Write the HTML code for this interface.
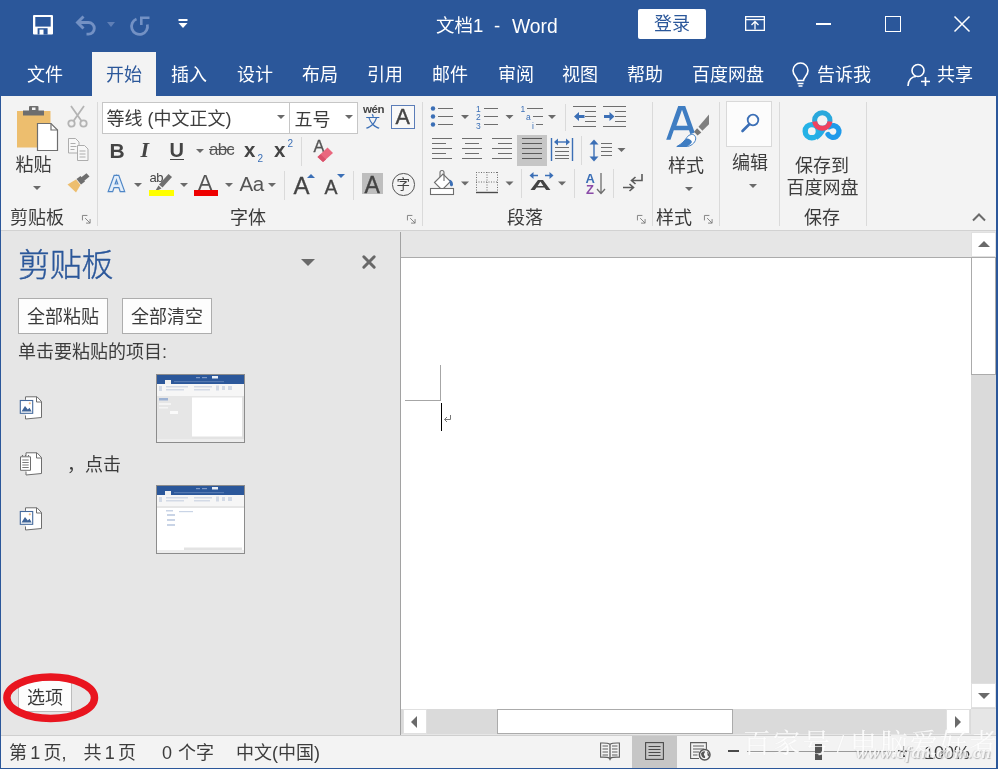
<!DOCTYPE html>
<html lang="zh-CN">
<head>
<meta charset="utf-8">
<title>文档1 - Word</title>
<style>
*{box-sizing:border-box;margin:0;padding:0}
html,body{width:998px;height:769px;overflow:hidden;background:#E6E6E6}
body{font-family:"Liberation Sans","Noto Sans CJK SC",sans-serif;font-size:18px;color:#3A3A3A;position:relative}
body>*{will-change:transform}
.abs,.t,.i{position:absolute}
.t{white-space:nowrap;line-height:1}
svg{position:absolute;overflow:visible}
#title{position:absolute;left:0;top:0;width:998px;height:96px;background:#2B579A}
#title .t{color:#fff;font-size:18px}
#ribbon{position:absolute;left:0;top:96px;width:998px;height:135px;background:#F3F3F3;border-bottom:1px solid #D2D2D2}
.sep{position:absolute;width:1px;background:#DADADA}
.gl{font-size:18px;color:#3A3A3A}
#pane{position:absolute;left:0;top:231px;width:400px;height:504px;background:#E6E6E6}
#doc{position:absolute;left:400px;top:231px;width:598px;height:504px;background:#E6E6E6}
#status{position:absolute;left:0;top:735px;width:998px;height:34px;background:#F3F3F3;border-top:1px solid #CFCFCF}
.btn{position:absolute;background:#FDFDFD;border:1px solid #ADADAD;font-size:18px;text-align:center;color:#3A3A3A}
#lb{position:absolute;left:0;top:52px;width:998px;height:717px;border:solid #2B579A;border-width:0 2px 1px 1px;pointer-events:none}
</style>
</head>
<body>
<div id="title">
<!--TITLE-->
<!-- quick access -->
<svg style="left:33px;top:15px" width="20" height="20" viewBox="0 0 20 20"><path d="M1 0h18a1 1 0 0 1 1 1v17.500a1 1 0 0 1-1 1H1a1 1 0 0 1-1-1V1a1 1 0 0 1 1-1z" fill="#fff"/><rect x="2.300" y="2" width="15.400" height="9.600" fill="#2B579A"/><rect x="4.600" y="13.200" width="10" height="6.300" fill="#2B579A"/><rect x="6.500" y="14.600" width="4" height="4.900" fill="#fff"/></svg>
<svg style="left:75px;top:15px" width="24" height="21" viewBox="0 0 24 21" fill="none" stroke="#7391C4" stroke-width="2.900"><path d="M8.500 1.500 L2.500 7.500 L8.500 13.500"/><path d="M3 7.500 H13.500 a5.800 5.800 0 0 1 0 11.600 H11.500"/></svg>
<svg style="left:107px;top:22px" width="8" height="5" viewBox="0 0 8 5"><path d="M0 0h8L4 5z" fill="#5F7FB6"/></svg>
<svg style="left:129px;top:14px" width="22" height="22" viewBox="129 14 22 22" fill="none" stroke="#7391C4" stroke-width="2.800"><path d="M147.300 24.500 A8 8 0 1 1 136.500 19"/><path d="M141.300 25 V17.800 H149.500" stroke-width="2.600"/></svg>
<svg style="left:178px;top:19px" width="10" height="9" viewBox="0 0 10 9"><rect x="0.5" y="0" width="9" height="2" fill="#fff"/><path d="M0.5 4h9L5 9z" fill="#fff"/></svg>
<div class="t" style="left:436px;top:17px;font-size:18.500px">文档1</div><div class="t" style="left:494px;top:17px;font-size:18.500px">-</div><div class="t" style="left:512px;top:16.500px;font-size:19.300px">Word</div>
<div class="abs" style="left:638px;top:9px;width:68px;height:30px;background:#fff;border-radius:2px"></div>
<div class="t" style="left:654px;top:15px;color:#2B579A!important">登录</div>
<svg style="left:745px;top:16px" width="20" height="15" viewBox="0 0 20 15" fill="none" stroke="#fff" stroke-width="1.3"><rect x="0.65" y="0.65" width="18.7" height="13.7"/><path d="M0.65 3.6H19.35"/><path d="M10 13.500V5.500M6.500 9l3.500-3.500 3.500 3.500"/></svg>
<div class="abs" style="left:816px;top:23.300px;width:15px;height:1.400px;background:#fff"></div>
<div class="abs" style="left:885px;top:16px;width:15.500px;height:15.500px;border:1.400px solid #fff"></div>
<svg style="left:954px;top:16px" width="16" height="16" viewBox="0 0 16 16" stroke="#fff" stroke-width="1.5"><path d="M0.5 0.5L15.5 15.5M15.5 0.5L0.5 15.5"/></svg>
<!-- tabs -->
<div class="abs" style="left:92px;top:52px;width:64px;height:44px;background:#F3F3F3"></div>
<div class="t" style="left:27px;top:65.700px">文件</div>
<div class="t" style="left:106px;top:65.700px;color:#2B579A!important">开始</div>
<div class="t" style="left:171px;top:65.700px">插入</div>
<div class="t" style="left:237px;top:65.700px">设计</div>
<div class="t" style="left:302px;top:65.700px">布局</div>
<div class="t" style="left:367px;top:65.700px">引用</div>
<div class="t" style="left:432px;top:65.700px">邮件</div>
<div class="t" style="left:498px;top:65.700px">审阅</div>
<div class="t" style="left:562px;top:65.700px">视图</div>
<div class="t" style="left:627px;top:65.700px">帮助</div>
<div class="t" style="left:692px;top:65.700px">百度网盘</div>
<svg style="left:792px;top:62px" width="17" height="25" viewBox="0 0 17 25" fill="none" stroke="#fff" stroke-width="1.6"><path d="M5.5 18.5c0-3-4.5-5-4.5-10a7.5 7.5 0 0 1 15 0c0 5-4.500 7-4.500 10z"/><path d="M5.500 21.500h6M6.500 24h4"/></svg>
<div class="t" style="left:817px;top:65.700px">告诉我</div>
<svg style="left:907px;top:63px" width="24" height="24" viewBox="0 0 24 24" fill="none" stroke="#fff" stroke-width="1.6"><circle cx="11" cy="7.500" r="6"/><path d="M1 23c0-6 4-9.500 8-9.500"/><path d="M18.500 14v9M14 18.500h9"/></svg>
<div class="t" style="left:937px;top:65.700px">共享</div>
<!--/TITLE-->
</div>
<div id="ribbon">
<!--RIBBON-->
<!-- coordinates inside ribbon: y = pageY-96 -->
<div class="sep" style="left:97px;top:6px;height:124px"></div>
<div class="sep" style="left:422px;top:6px;height:124px"></div>
<div class="sep" style="left:652px;top:6px;height:124px"></div>
<div class="sep" style="left:719px;top:6px;height:124px"></div>
<div class="sep" style="left:779px;top:6px;height:124px"></div>
<div class="sep" style="left:866px;top:6px;height:124px"></div>
<!-- clipboard group -->
<svg style="left:16px;top:9px" width="44" height="47" viewBox="0 0 44 47">
<rect x="1" y="6" width="33.500" height="36.500" fill="#EDBE6E"/>
<rect x="13" y="1" width="9.500" height="6" rx="1" fill="#6E6E6E"/><rect x="16" y="2.500" width="3.500" height="2.500" fill="#F3F3F3"/>
<rect x="7" y="5.500" width="21" height="5" fill="#6E6E6E"/>
<path d="M21.500 18.500h13.500l6.500 6.500v20.500h-20z" fill="#fff" stroke="#6E6E6E" stroke-width="1.200"/><path d="M35 18.500v6.500h6.500" fill="none" stroke="#6E6E6E" stroke-width="1.200"/>
</svg>
<div class="t" style="left:15.500px;top:60px;color:#3C3C3C">粘贴</div>
<svg class="dd" style="left:33px;top:90px" width="8" height="4" viewBox="0 0 8 4"><path d="M0 0h8L4 4z" fill="#6A6A6A"/></svg>
<!-- scissors -->
<svg style="left:67px;top:9px" width="21" height="23" viewBox="0 0 21 23" fill="none" stroke="#B4B4B4" stroke-width="1.800"><path d="M4 1L14.500 16M17 1L6.500 16"/><circle cx="4.500" cy="18.500" r="3.200"/><circle cx="16.500" cy="18.500" r="3.200"/></svg>
<!-- copy -->
<svg style="left:68px;top:42px" width="21" height="23" viewBox="0 0 21 23" fill="#F7F7F7" stroke="#ADADAD" stroke-width="1"><path d="M0.500 0.500h7l3.500 3.500v11h-10.500z"/><path d="M2.500 5.500h5M2.500 8.500h6M2.500 11.500h4"/><path d="M9.500 7.500h7l3.500 3.500v11.500h-10.500z"/><path d="M11.500 13h6M11.500 16h6M11.500 19h6"/></svg>
<!-- format painter -->
<svg style="left:66px;top:76px" width="25" height="22" viewBox="0 0 25 22"><path d="M15 5.500L20.500 1.200L23.500 4.500L18 9z" fill="#6E6E6E"/><path d="M10.500 7L14.500 4L19 9.500L15 12.500z" fill="#6E6E6E"/><path d="M1.500 12.500L10 7.500L14.500 13L10 20.500z" fill="#EDBE6E"/></svg>
<div class="t gl" style="left:10px;top:113px">剪贴板</div>
<svg class="ln" style="left:81.500px;top:118.500px" width="9" height="9" viewBox="0 0 10 10" fill="none" stroke="#7A7A7A" stroke-width="1"><path d="M0.500 6V0.500H6"/><path d="M3.500 3.500L9 9M9 4.500V9H4.500"/></svg>
<!-- font group -->
<div class="abs" style="left:102px;top:6px;width:256px;height:32px;background:#fff;border:1px solid #C6C6C6"></div>
<div class="abs" style="left:289px;top:6px;width:1px;height:32px;background:#C6C6C6"></div>
<div class="t" style="left:106.500px;top:13.500px;font-size:18px;color:#3C3C3C">等线 (中文正文)</div>
<svg style="left:277px;top:19px" width="8" height="4" viewBox="0 0 8 4"><path d="M0 0h8L4 4z" fill="#6A6A6A"/></svg>
<div class="t" style="left:294.500px;top:14.500px;font-size:18px;color:#3C3C3C">五号</div>
<svg style="left:345px;top:19px" width="8" height="4" viewBox="0 0 8 4"><path d="M0 0h8L4 4z" fill="#6A6A6A"/></svg>
<div class="t" style="left:363px;top:8px;font-size:11.500px;font-weight:bold;color:#444;letter-spacing:-0.400px">wén</div>
<div class="t" style="left:365.500px;top:18.500px;font-size:14.500px;color:#3B6FB6">文</div>
<div class="abs" style="left:391px;top:9px;width:24px;height:24px;border:1px solid #5B7DB8;background:#F8F8F8"></div>
<div class="t" style="left:395.500px;top:11px;font-size:21.500px;color:#444;-webkit-text-stroke:0.400px #444">A</div>
<!-- row 2 -->
<div class="t" style="left:109.500px;top:43.500px;font-size:21px;font-weight:bold;color:#444">B</div>
<div class="t" style="left:140.500px;top:42.500px;font-size:22px;font-weight:bold;font-style:italic;color:#444;font-family:'Liberation Serif',serif">I</div>
<div class="t" style="left:169.500px;top:43.500px;font-size:20px;font-weight:bold;color:#444">U</div>
<div class="abs" style="left:170px;top:63px;width:14px;height:1px;background:#444"></div>
<svg style="left:196px;top:53px" width="8" height="4" viewBox="0 0 8 4"><path d="M0 0h8L4 4z" fill="#6A6A6A"/></svg>
<div class="t" style="left:209px;top:45px;font-size:17px;color:#555;letter-spacing:-0.800px;text-decoration:line-through">abc</div>
<div class="t" style="left:244px;top:44px;font-size:20.500px;font-weight:bold;color:#444">x</div>
<div class="t" style="left:257.500px;top:57.500px;font-size:10px;color:#3B6FB6">2</div>
<div class="t" style="left:274px;top:44px;font-size:20.500px;font-weight:bold;color:#444">x</div>
<div class="t" style="left:287.500px;top:43px;font-size:10px;color:#3B6FB6">2</div>
<div class="sep" style="left:301px;top:41px;height:29px"></div>
<div class="t" style="left:313.500px;top:41.500px;font-size:16.500px;color:#555;-webkit-text-stroke:0.300px #555">A</div>
<svg style="left:316px;top:50px" width="18" height="17" viewBox="0 0 18 17"><path d="M1.500 11L11.500 1.500L17 7L7 16z" fill="#E9677E"/><path d="M1.500 11L4.500 8.200L10 13.500L7 16z" fill="#D9506A"/></svg>
<!-- row 3 -->
<div class="t" style="left:108.500px;top:77px;font-size:22px;font-weight:bold;color:#E4EEF9;-webkit-text-stroke:2.400px #4E86C6;paint-order:stroke">A</div>
<svg style="left:134px;top:87px" width="8" height="4" viewBox="0 0 8 4"><path d="M0 0h8L4 4z" fill="#6A6A6A"/></svg>
<div class="t" style="left:149.500px;top:74.500px;font-size:13px;color:#444;letter-spacing:-0.500px">ab</div>
<svg style="left:153px;top:77px" width="20" height="19" viewBox="0 0 20 19"><path d="M15.500 1L19 4L9.500 14.500L6 11.500z" fill="#6E6E6E"/><path d="M5.500 12.500L8.500 15.500L3 18L2.500 17.500z" fill="#6E6E6E"/></svg>
<div class="abs" style="left:149px;top:94px;width:24.500px;height:5.500px;background:#FFFF00"></div>
<svg style="left:180px;top:87px" width="8" height="4" viewBox="0 0 8 4"><path d="M0 0h8L4 4z" fill="#6A6A6A"/></svg>
<div class="t" style="left:198px;top:77px;font-size:21.500px;color:#555">A</div>
<div class="abs" style="left:194px;top:94px;width:24px;height:5.500px;background:#EE0000"></div>
<svg style="left:225px;top:87px" width="8" height="4" viewBox="0 0 8 4"><path d="M0 0h8L4 4z" fill="#6A6A6A"/></svg>
<div class="t" style="left:239.500px;top:78px;font-size:20.500px;color:#555;letter-spacing:-0.500px">Aa</div>
<svg style="left:268px;top:87px" width="8" height="4" viewBox="0 0 8 4"><path d="M0 0h8L4 4z" fill="#6A6A6A"/></svg>
<div class="sep" style="left:284px;top:75px;height:29px"></div>
<div class="t" style="left:293.500px;top:78px;font-size:24px;color:#444;-webkit-text-stroke:0.300px #444">A</div>
<svg style="left:306.500px;top:78px" width="8" height="4" viewBox="0 0 8 4"><path d="M0 4h8L4 0z" fill="#3B6FB6"/></svg>
<div class="t" style="left:324.500px;top:82px;font-size:19.500px;color:#444;-webkit-text-stroke:0.300px #444">A</div>
<svg style="left:336.500px;top:78px" width="8" height="4" viewBox="0 0 8 4"><path d="M0 0h8L4 4z" fill="#3B6FB6"/></svg>
<div class="sep" style="left:353px;top:75px;height:29px"></div>
<div class="abs" style="left:362px;top:77px;width:21px;height:21px;background:#BEBEBE"></div>
<div class="t" style="left:364.500px;top:77.500px;font-size:23px;color:#444;-webkit-text-stroke:0.400px #444">A</div>
<div class="abs" style="left:392px;top:77px;width:22.500px;height:22.500px;border:1.500px solid #555;border-radius:50%"></div>
<div class="t" style="left:396.500px;top:81.500px;font-size:13.500px;color:#444">字</div>
<div class="t gl" style="left:230px;top:113px">字体</div>
<svg class="ln" style="left:406.500px;top:118.500px" width="9" height="9" viewBox="0 0 10 10" fill="none" stroke="#7A7A7A" stroke-width="1"><path d="M0.500 6V0.500H6"/><path d="M3.500 3.500L9 9M9 4.500V9H4.500"/></svg>
<!-- paragraph group -->
<svg style="left:430px;top:9px" width="200" height="24" viewBox="430 105 200 24">
<g fill="#3B6FB6"><circle cx="433" cy="108.500" r="2.200"/><circle cx="433" cy="116.500" r="2.200"/><circle cx="433" cy="124.500" r="2.200"/></g>
<g stroke="#6E6E6E" stroke-width="1.200" fill="none"><path d="M438 108.500h15M438 116.500h15M438 124.500h15"/>
<path d="M484 108.500h14M484 116.500h14M484 124.500h14"/>
<path d="M527 108.500h16M533 116.500h10M536 124.500h7"/>
<path d="M573 106.500h23M585 111.500h11M585 116.500h11M585 121.500h11M573 126.500h23"/>
<path d="M603 106.500h23M615 111.500h11M615 116.500h11M615 121.500h11M603 126.500h23"/></g>
<g fill="#6A6A6A"><path d="M461 115h8l-4 4z"/><path d="M505.500 115h8l-4 4z"/><path d="M548 115h8l-4 4z"/></g>
<g font-family="Liberation Sans, sans-serif" font-size="8.500" fill="#3B6FB6"><text x="476" y="111.500">1</text><text x="476" y="120">2</text><text x="476" y="128.500">3</text><text x="520.500" y="111.500">1</text><text x="526" y="120">a</text><text x="532" y="128.500">i</text></g>
<g fill="#3B6FB6"><path d="M574 116.500l5-4.500v3h5.500v3H579v3z"/><path d="M614.500 116.500l-5-4.500v3H604v3h5.500v3z"/></g>
</svg>
<div class="sep" style="left:565px;top:8px;height:27px"></div>
<!-- row 2 -->
<div class="abs" style="left:517px;top:39px;width:30px;height:31px;background:#C6C6C6"></div>
<svg style="left:430px;top:39px" width="200" height="30" viewBox="430 135 200 30">
<g stroke="#6E6E6E" stroke-width="1.200" fill="none">
<path d="M432 138.500h20M432 143.500h14M432 148.500h20M432 153.500h14M432 158.500h20"/>
<path d="M462 138.500h20M465 143.500h14M462 148.500h20M465 153.500h14M462 158.500h20"/>
<path d="M492 138.500h20M498 143.500h14M492 148.500h20M498 153.500h14M492 158.500h20"/>
<path d="M522 138.500h20M522 143.500h20M522 148.500h20M522 153.500h20M522 158.500h20" stroke="#5A5A5A"/>
<path d="M555 147.500h14M555 151.500h14M555 155.500h14M555 158.500h14"/>
<path d="M601 143.500h11M601 147.500h11M601 151.500h11M601 155.500h11"/>
</g>
<g stroke="#3B6FB6" stroke-width="1.400" fill="none"><path d="M551.500 138v23M572.500 138v23"/><path d="M555 142h14"/><path d="M594 142v17"/></g>
<g fill="#3B6FB6"><path d="M554 142l4-3.500v7z"/><path d="M570 142l-4-3.500v7z"/><path d="M594 139.500l4.500 5h-9z"/><path d="M594 161.500l4.500-5h-9z"/></g>
<path d="M617.500 148h8l-4 4z" fill="#6A6A6A"/>
</svg>
<div class="sep" style="left:581px;top:40px;height:29px"></div>
<!-- row 3 -->
<svg style="left:428px;top:73px" width="220" height="28" viewBox="428 169 220 28">
<!-- bucket -->
<g fill="#fff" stroke="#6E6E6E" stroke-width="1.100"><path d="M434.500 182.500L443 174l7.500 7.500-8.500 8.500z"/><path d="M440 177v-4.500a2 2 0 0 1 4 0V181" fill="none"/><rect x="430.500" y="188.500" width="23" height="6"/></g>
<path d="M449.500 179.500c2 0.500 3.500 2.500 3.500 5c0 2-2.500 2.500-3 0.500z" fill="#3B6FB6"/>
<g fill="#6A6A6A"><path d="M461 181.500h8l-4 4z"/><path d="M505.500 181.500h8l-4 4z"/><path d="M558 181.500h8l-4 4z"/></g>
<!-- borders -->
<g stroke="#6E6E6E" stroke-width="1" fill="none" stroke-dasharray="1 1.500"><path d="M476.500 172v20M487 172v20M497.500 172v20M476 172.500h22M476 182h22"/></g>
<path d="M476 192.500h22" stroke="#4A4A4A" stroke-width="1.400"/>
<!-- asian layout -->
<text x="529.800" y="190.500" font-family="Liberation Sans, sans-serif" font-size="14.500" font-weight="bold" fill="#444" transform="translate(529.800 0) scale(2.050 1) translate(-529.800 0)">A</text>
<g stroke="#3B6FB6" stroke-width="1.300" fill="none"><path d="M531 175.500h7M545 175.500h7"/></g>
<g fill="#3B6FB6"><path d="M529.500 175.500l4-3.500v7z"/><path d="M553.500 175.500l-4-3.500v7z"/></g>
<!-- sort -->
<text x="585.500" y="182.500" font-family="Liberation Sans, sans-serif" font-size="13" font-weight="bold" fill="#3B6FB6">A</text>
<text x="586" y="194" font-family="Liberation Sans, sans-serif" font-size="13" font-weight="bold" fill="#8A4BA8">Z</text>
<g stroke="#6E6E6E" stroke-width="1.300" fill="none"><path d="M601 173v20M597 189l4 4.500 4-4.500"/></g>
<!-- show marks -->
<g stroke="#5A5A5A" stroke-width="1.600" fill="none"><path d="M642 174v6.500h-10M635.500 177l-4 3.500 4 3.500"/><path d="M623 187.500h10M629.500 184l4 3.500-4 3.500"/></g>
</svg>
<div class="sep" style="left:521px;top:73px;height:29px"></div>
<div class="sep" style="left:574px;top:73px;height:29px"></div>
<div class="sep" style="left:613px;top:73px;height:29px"></div>
<div class="t gl" style="left:507px;top:113px">段落</div>
<svg class="ln" style="left:636.500px;top:118.500px" width="9" height="9" viewBox="0 0 10 10" fill="none" stroke="#7A7A7A" stroke-width="1"><path d="M0.500 6V0.500H6"/><path d="M3.500 3.500L9 9M9 4.500V9H4.500"/></svg>
<!-- styles group -->
<svg style="left:664px;top:8px" width="48" height="44" viewBox="664 104 48 44">
<path d="M666.200 139.800L678.200 106h7l9.500 26.500l-4.300 1.800l-1.400-4h-15.200l-3.300 9.500zM676.400 125.700h11.200l-5.600-16z" fill="#3F7DC2"/>
<path d="M709 114.500v9.800l-6.600 6.400l-3.900-3.900z" fill="#7F7F7F"/>
<path d="M697.100 128.200l4.200 4.200l-3.800 3.200l-3.500-3.900z" fill="#757575"/>
<path d="M691.500 134.500c2.500-0.500 4.500 2 4.200 4.500c-0.500 4-5 7.500-9.700 7.500h-9.200c5-2.500 8-6 10-9c1.200-1.800 2.700-2.700 4.700-3z" fill="#FDFDFD" stroke="#3F7DC2" stroke-width="1"/>
<path d="M676.800 146.500c4.500-2.200 7.500-5.200 9.500-8c2.500-0.300 4.700 1 5.700 3.500c-1.500 2.700-4 4.500-7 4.500z" fill="#3F7DC2"/>
</svg>
<div class="t" style="left:668px;top:60.500px;color:#3C3C3C">样式</div>
<svg style="left:685px;top:90.500px" width="8" height="4" viewBox="0 0 8 4"><path d="M0 0h8L4 4z" fill="#6A6A6A"/></svg>
<div class="t gl" style="left:656px;top:113px">样式</div>
<svg class="ln" style="left:703.500px;top:118.500px" width="9" height="9" viewBox="0 0 10 10" fill="none" stroke="#7A7A7A" stroke-width="1"><path d="M0.500 6V0.500H6"/><path d="M3.500 3.500L9 9M9 4.500V9H4.500"/></svg>
<!-- editing -->
<div class="abs" style="left:726px;top:5px;width:46px;height:45.500px;background:#FCFCFC;border:1px solid #D9D9D9"></div>
<svg style="left:738px;top:14px" width="24" height="24" viewBox="738 110 24 24" fill="none" stroke="#3B6FB6"><circle cx="753" cy="120" r="5.300" stroke-width="1.800"/><path d="M749 124.500L742.500 131" stroke-width="2.600" stroke-linecap="round"/></svg>
<div class="t" style="left:732px;top:57.500px;color:#3C3C3C">编辑</div>
<svg style="left:748.500px;top:88px" width="8" height="4" viewBox="0 0 8 4"><path d="M0 0h8L4 4z" fill="#6A6A6A"/></svg>
<!-- baidu -->
<svg style="left:800px;top:12px" width="44" height="36" viewBox="800 108 44 36" fill="none">
<circle cx="811.800" cy="131.200" r="6.600" stroke="#25B2E6" stroke-width="5.400"/>
<path d="M816 137.500C820 135.500 822 132 824 128" stroke="#25ACE6" stroke-width="5"/>
<path d="M829.500 126.800A5.900 5.900 0 1 1 828 134.500" stroke="#1F9AEA" stroke-width="5.200" stroke-linecap="round"/>
<circle cx="822.300" cy="120.500" r="7.700" stroke="#2AA8DC" stroke-width="5"/>
<path d="M814.650 121.500a7.700 7.700 0 0 0 15.300 0" stroke="#F0425F" stroke-width="5"/>
</svg>
<div class="t" style="left:795px;top:60.500px;color:#3C3C3C">保存到</div>
<div class="t" style="left:786.500px;top:83px;color:#3C3C3C">百度网盘</div>
<div class="t gl" style="left:804px;top:113px">保存</div>
<svg style="left:972px;top:117px" width="14" height="8" viewBox="0 0 14 8" fill="none" stroke="#6A6A6A" stroke-width="2"><path d="M1 7.500L7 1.500L13 7.500"/></svg>
<!--/RIBBON-->
</div>
<div id="pane">
<!--PANE-->
<!-- coordinates: y = pageY-231 -->
<div class="t" style="left:18px;top:18.300px;font-size:32px;font-weight:300;color:#2B579A;letter-spacing:-0.300px;-webkit-text-stroke:0.350px #2B579A">剪贴板</div>
<svg style="left:301px;top:28px" width="14" height="7" viewBox="0 0 14 7"><path d="M0 0h14L7 7z" fill="#6A6A6A"/></svg>
<svg style="left:362px;top:24px" width="14" height="14" viewBox="0 0 14 14" stroke="#686868" stroke-width="3" stroke-linecap="round"><path d="M1.800 1.800L12.200 12.200M12.200 1.800L1.800 12.200"/></svg>
<div class="btn" style="left:18px;top:67px;width:90px;height:35.500px;line-height:36px">全部粘贴</div>
<div class="btn" style="left:122px;top:67px;width:90px;height:35.500px;line-height:36px">全部清空</div>
<div class="t" style="left:18px;top:112px;font-size:18px;color:#3C3C3C">单击要粘贴的项目:</div>
<!-- item 1 -->
<svg class="pic" style="left:19px;top:165px" width="24" height="24" viewBox="0 0 24 24"><path d="M6.500 19.500v3.500l16-1.500V5.500L18 0.800H6.500v3" fill="#fff" stroke="#6E6E6E" stroke-width="1"/><path d="M17.500 1v5h5" fill="none" stroke="#6E6E6E" stroke-width="1"/><rect x="1.300" y="4.500" width="12.400" height="12.800" fill="#fff" stroke="#44699C" stroke-width="1.100"/><path d="M2.500 15.500l3.500-5.500 2.800 3.500 1.700-1.800 2.200 3.800z" fill="#3F6498"/><circle cx="10.800" cy="7.300" r="1.100" fill="#E9B98B"/></svg>
<svg class="thumb" style="left:156px;top:143px" width="89" height="69" viewBox="0 0 89 69"><rect x="0.500" y="0.500" width="88" height="68" fill="#fff" stroke="#8C8C8C"/><rect x="1" y="1" width="87" height="9" fill="#2B579A"/><g fill="#7E99C6"><rect x="40" y="3" width="4" height="1.200"/><rect x="46" y="3" width="5" height="1.200"/><rect x="18" y="7" width="50" height="1.200" opacity="0.500"/></g><rect x="9" y="6" width="6" height="4" fill="#F0F0F0"/><rect x="56" y="2" width="6" height="2.500" fill="#E8EEF7"/><rect x="1" y="10" width="87" height="12" fill="#F6F6F6"/><g fill="#D3DAE6"><rect x="3" y="12" width="3" height="5"/><rect x="10" y="12" width="22" height="1.500"/><rect x="10" y="15" width="18" height="1.500"/><rect x="38" y="12" width="18" height="1.500"/><rect x="38" y="15" width="16" height="1.500"/><rect x="60" y="11.500" width="3" height="5"/><rect x="66" y="12" width="3" height="4"/><rect x="72" y="12" width="4" height="4"/></g><rect x="1" y="22" width="35" height="43" fill="#E6E6E6"/><rect x="3" y="24" width="9" height="2.500" fill="#9DB2D3"/><rect x="3" y="29" width="12" height="2" fill="#F4F4F4"/><rect x="3" y="33" width="9" height="1.500" fill="#F4F4F4"/><rect x="14" y="37" width="8" height="3" fill="#FAFAFA"/><rect x="36" y="22" width="50" height="1.500" fill="#E6E6E6"/><rect x="86" y="22" width="2" height="43" fill="#E0E0E0"/><rect x="1" y="65" width="87" height="3" fill="#EDEDED"/><rect x="36" y="62.500" width="50" height="2.500" fill="#E3E3E3"/></svg>
<!-- item 2 -->
<svg class="txt" style="left:19px;top:221px" width="24" height="24" viewBox="0 0 24 24"><path d="M7 19.500v3.500l15.500-1.500V5.500L18 0.800H7v3" fill="#fff" stroke="#6E6E6E" stroke-width="1"/><path d="M17.500 1v5h5" fill="none" stroke="#6E6E6E" stroke-width="1"/><path d="M1.500 4.800h10v13.500h-10z" fill="#fff" stroke="#6E6E6E" stroke-width="1"/><path d="M3.500 4.300V3M6.500 4.300V3M9.500 4.300V3" stroke="#6E6E6E" stroke-width="1.200"/><path d="M3.300 8h6.400M3.300 10.500h6.400M3.300 13h6.400M3.300 15.500h6.400" stroke="#7A7A7A" stroke-width="1"/></svg>
<div class="t" style="left:67px;top:224.500px;font-size:18px;color:#3A3A3A">，点击</div>
<!-- item 3 -->
<svg class="pic" style="left:19px;top:276px" width="24" height="24" viewBox="0 0 24 24"><path d="M6.500 19.500v3.500l16-1.500V5.500L18 0.800H6.500v3" fill="#fff" stroke="#6E6E6E" stroke-width="1"/><path d="M17.500 1v5h5" fill="none" stroke="#6E6E6E" stroke-width="1"/><rect x="1.300" y="4.500" width="12.400" height="12.800" fill="#fff" stroke="#44699C" stroke-width="1.100"/><path d="M2.500 15.500l3.500-5.500 2.800 3.500 1.700-1.800 2.200 3.800z" fill="#3F6498"/><circle cx="10.800" cy="7.300" r="1.100" fill="#E9B98B"/></svg>
<svg class="thumb" style="left:156px;top:254px" width="89" height="69" viewBox="0 0 89 69"><rect x="0.500" y="0.500" width="88" height="68" fill="#fff" stroke="#8C8C8C"/><rect x="1" y="1" width="87" height="9" fill="#2B579A"/><g fill="#7E99C6"><rect x="40" y="3" width="4" height="1.200"/><rect x="46" y="3" width="5" height="1.200"/><rect x="18" y="7" width="50" height="1.200" opacity="0.500"/></g><rect x="9" y="6" width="6" height="4" fill="#F0F0F0"/><rect x="56" y="2" width="6" height="2.500" fill="#E8EEF7"/><rect x="1" y="10" width="87" height="11" fill="#F6F6F6"/><g fill="#D3DAE6"><rect x="3" y="12" width="3" height="5"/><rect x="10" y="12" width="22" height="1.500"/><rect x="10" y="15" width="18" height="1.500"/><rect x="38" y="12" width="18" height="1.500"/><rect x="38" y="15" width="16" height="1.500"/><rect x="60" y="11.500" width="3" height="5"/><rect x="66" y="12" width="3" height="4"/><rect x="72" y="12" width="4" height="4"/></g><rect x="1" y="21" width="87" height="2" fill="#E6E6E6"/><g fill="#C9D4E6"><rect x="10" y="25" width="7" height="1.500"/><rect x="11" y="29" width="8" height="2"/><rect x="11" y="34" width="8" height="2"/><rect x="11" y="39" width="8" height="2"/><rect x="23" y="26" width="14" height="1.200"/></g><rect x="1" y="65" width="87" height="3" fill="#EDEDED"/><rect x="28" y="62.500" width="58" height="2.500" fill="#E3E3E3"/></svg>
<!-- options -->
<div class="btn" style="left:18px;top:449px;width:54px;height:32px;line-height:35px;border-color:#BDBDBD">选项</div>
<svg style="left:0;top:438px" width="104" height="56" viewBox="0 669 104 56"><ellipse cx="50.700" cy="697.700" rx="43.800" ry="20.700" fill="none" stroke="#E9151F" stroke-width="7.500"/></svg>
<!--/PANE-->
</div>
<div id="doc">
<!--DOC-->
<!-- coordinates: x = pageX-400, y = pageY-231 -->
<div class="abs" style="left:0;top:1px;width:1px;height:503px;background:#A2A2A2"></div>
<div class="abs" style="left:1px;top:26px;width:570px;height:452px;background:#fff;border-top:1px solid #ABABAB"></div>
<!-- v scrollbar -->
<div class="abs" style="left:571px;top:1px;width:25px;height:477px;background:#DADADA"></div>
<div class="abs" style="left:571px;top:1px;width:25px;height:25px;background:#fff;border:1px solid #E0E0E0"></div>
<svg style="left:578px;top:10px" width="12" height="6" viewBox="0 0 12 6"><path d="M0 6h12L6 0z" fill="#6A6A6A"/></svg>
<div class="abs" style="left:571px;top:26px;width:25px;height:117.500px;background:#fff;border:1px solid #ABABAB"></div>
<div class="abs" style="left:571px;top:452px;width:25px;height:25px;background:#fff;border:1px solid #E0E0E0"></div>
<svg style="left:578px;top:462px" width="12" height="6" viewBox="0 0 12 6"><path d="M0 0h12L6 6z" fill="#6A6A6A"/></svg>
<!-- h scrollbar -->
<div class="abs" style="left:1px;top:478px;width:570px;height:25px;background:#DADADA"></div>
<div class="abs" style="left:3px;top:478px;width:24px;height:25px;background:#fff;border:1px solid #E0E0E0"></div>
<svg style="left:11px;top:485px" width="6" height="12" viewBox="0 0 6 12"><path d="M6 0v12L0 6z" fill="#6A6A6A"/></svg>
<div class="abs" style="left:97px;top:478px;width:236px;height:25px;background:#fff;border:1px solid #ABABAB"></div>
<div class="abs" style="left:546px;top:478px;width:24px;height:25px;background:#fff;border:1px solid #E0E0E0"></div>
<svg style="left:555px;top:485px" width="6" height="12" viewBox="0 0 6 12"><path d="M0 0v12L6 6z" fill="#6A6A6A"/></svg>
<!-- page marks -->
<div class="abs" style="left:40px;top:134px;width:1px;height:36px;background:#A6A6A6"></div>
<div class="abs" style="left:5px;top:169px;width:36px;height:1px;background:#A6A6A6"></div>
<div class="abs" style="left:41px;top:172px;width:1px;height:28px;background:#000"></div>
<svg style="left:44px;top:184px" width="8" height="8" viewBox="0 0 8 8" fill="none" stroke="#777" stroke-width="1"><path d="M6.500 0v4.500H0.500M3 2l-2.500 2.500L3 7"/></svg>
<!--/DOC-->
</div>
<div id="status">
<!--STATUS-->
<!-- coordinates: y = pageY-736 (status starts 736 incl. border) -->
<div class="t" style="left:9px;top:7.500px;font-size:18px;color:#3C3C3C;word-spacing:-1.700px">第 1 页,</div><div class="t" style="left:83.500px;top:7.500px;font-size:18px;color:#3C3C3C;word-spacing:-1.700px">共 1 页</div>
<div class="t" style="left:162px;top:7.500px;font-size:18px;color:#3C3C3C;word-spacing:1px">0 个字</div>
<div class="t" style="left:236px;top:7.500px;font-size:18px;color:#3C3C3C">中文(中国)</div>
<!-- read mode -->
<svg style="left:600px;top:6px" width="20" height="19" viewBox="0 0 20 19" fill="none" stroke="#5E5E5E" stroke-width="1.100"><path d="M10 2.200C8.500 1.200 5 0.800 0.600 1v14.200C5 15 8.500 15.300 10 16.500C11.500 15.300 15 15 19.400 15.200V1C15 0.800 11.500 1.200 10 2.200z"/><path d="M10 2.200v16" stroke-width="1.300"/><path d="M2.500 4h5.500M2.500 7h5.500M2.500 10h5.500M2.500 13h5.500M12 4h5.500M12 7h5.500M12 10h5.500M12 13h5.500"/></svg>
<!-- print layout -->
<div class="abs" style="left:632px;top:0;width:45px;height:33px;background:#C6C6C6"></div>
<svg style="left:645px;top:6px" width="19" height="18" viewBox="0 0 19 18" fill="none" stroke="#4A4A4A" stroke-width="1.100"><rect x="0.600" y="0.600" width="17.800" height="16.800"/><path d="M3.500 4.500h12M3.500 7.500h12M3.500 10.500h12M3.500 13.500h12"/></svg>
<!-- web layout -->
<svg style="left:690px;top:6px" width="21" height="19" viewBox="0 0 21 19" fill="none" stroke="#5E5E5E" stroke-width="1.100"><path d="M9 16.500H0.600V0.600h15.800V7.500"/><path d="M3 4h11M3 7h11M3 10h6M3 13h4.500"/><circle cx="14.700" cy="12.700" r="5.300" fill="#F3F3F3" stroke="#555" stroke-width="1.500"/><path d="M11 11.500c1-2 3-2.500 4-2c0 1.500-1.500 2-1 3.500c0.500 1 1.500 1 1 3c-2 0.500-4-1.500-4-4.500zM17 9.500c1.500 1 2.500 2.500 2 5c-1-0.500-2-1.500-1.500-3c0-1-0.500-1-0.500-2z" fill="#555" stroke="none"/></svg>
<!-- zoom -->
<div class="abs" style="left:728px;top:14px;width:11px;height:2px;background:#4A4A4A"></div>
<div class="abs" style="left:747px;top:14.500px;width:148px;height:1px;background:#9A9A9A"></div>
<div class="abs" style="left:815px;top:8px;width:7px;height:16px;background:#555"></div>
<div class="abs" style="left:898px;top:14px;width:11px;height:2px;background:#4A4A4A"></div>
<div class="abs" style="left:902.500px;top:9.500px;width:2px;height:11px;background:#4A4A4A"></div>
<div class="t" style="left:924px;top:7.500px;font-size:18px;color:#3C3C3C">100%</div>
<!-- watermark -->
<div class="t" style="left:743px;top:-6px;font-size:27.500px;letter-spacing:2.300px;color:rgba(255,255,255,0.880);font-family:'Liberation Serif','Noto Serif CJK SC',serif;text-shadow:0 0 1px rgba(170,170,170,0.160)">百家号<span style="padding:0 4px">/</span>电脑爱好者</div>
<div class="t" style="left:856px;top:8px;font-size:17px;font-style:italic;font-weight:bold;color:rgba(255,255,255,0.820);font-family:'Liberation Serif',serif;letter-spacing:0.800px;text-shadow:1px 1px 1px rgba(90,90,90,0.420),-1px 0 1px rgba(120,120,120,0.200)">www.cfan.com.cn</div>
<!--/STATUS-->
</div>
<div id="lb"></div>
</body>
</html>
